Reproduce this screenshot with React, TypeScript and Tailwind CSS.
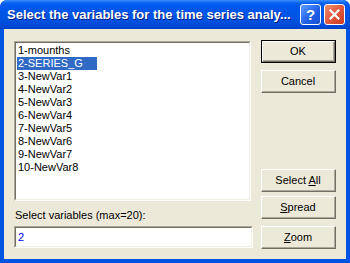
import React from "react";

const items = [
  "1-mounths",
  "2-SERIES_G",
  "3-NewVar1",
  "4-NewVar2",
  "5-NewVar3",
  "6-NewVar4",
  "7-NewVar5",
  "8-NewVar6",
  "9-NewVar7",
  "10-NewVar8",
];

function Btn({ children, def }: { children: React.ReactNode; def?: boolean }) {
  return (
    <div className={"w-[75px] h-[23px] " + (def ? "border border-black" : "")}>
      <div className="w-full h-full border-t border-l border-white border-b border-r border-b-[#716F64] border-r-[#716F64]">
        <div className="w-full h-full border-b border-r border-b-[#ACA899] border-r-[#ACA899] flex items-center justify-center text-[11px] text-black leading-none">
          <span className="whitespace-pre">{children}</span>
        </div>
      </div>
    </div>
  );
}

export default function App() {
  return (
    <div
      className="w-[350px] h-[263px] flex flex-col rounded-t-[7px] overflow-hidden bg-[#0054E3]"
      style={{ fontFamily: '"Liberation Sans", Arial, sans-serif' }}
    >
      <div className="h-[29px] shrink-0 flex items-center pl-[7px] pr-[5px] bg-[linear-gradient(to_bottom,#3C8EFF_0px,#0A62F0_3px,#0058EE_6px,#0054E3_18px,#0049D6_26px,#0040C4_29px)]">
        <div className="flex-1 text-white font-bold text-[13px] whitespace-nowrap [text-shadow:1px_1px_0_#0A1E80]">
          Select the variables for the time series analy...
        </div>
        <div className="flex gap-[3px] items-center">
          <div className="w-[21px] h-[21px] rounded-[3px] border border-white bg-[linear-gradient(135deg,#5C9CFF,#1E5FE8_60%,#1650D0)] flex items-center justify-center text-white font-bold text-[15px] leading-none">
            ?
          </div>
          <div className="w-[21px] h-[21px] rounded-[3px] border border-white bg-[linear-gradient(135deg,#EE8F6E,#E0553A_55%,#C43B22)] flex items-center justify-center">
            <svg width="11" height="11" viewBox="0 0 11 11">
              <path d="M1.5 1.5 L9.5 9.5 M9.5 1.5 L1.5 9.5" stroke="white" strokeWidth="2.2" strokeLinecap="square" />
            </svg>
          </div>
        </div>
      </div>
      <div className="flex-1 mx-[4px] mb-[4px] bg-[#ECE9D8] flex">
        <div className="pl-[10px] pt-[12px] w-[250px] flex flex-col">
          <div className="w-[237px] h-[160px] border-t border-l border-[#ACA899] border-b-white border-r-white border-b border-r">
            <div className="w-full h-full border-t border-l border-[#716F64] border-b border-r border-b-[#F1EFE2] border-r-[#F1EFE2] bg-white pt-[1px] pl-[1px]">
              {items.map((it, i) => (
                <div key={it} className="h-[13px] text-[11px] leading-[13px] text-black">
                  <span
                    className={
                      i === 1
                        ? "inline-block bg-[#316AC5] text-white w-[80px] pl-[1px]"
                        : "inline-block pl-[1px]"
                    }
                  >
                    {it}
                  </span>
                </div>
              ))}
            </div>
          </div>
          <div className="mt-[8px] pl-[1px] text-[11px] leading-[13px] text-black">
            Select variables (max=20):
          </div>
          <div className="mt-[4px] w-[239px] h-[22px] border-t border-l border-[#ACA899] border-b-white border-r-white border-b border-r">
            <div className="w-full h-full border-t border-l border-[#716F64] border-b border-r border-b-[#F1EFE2] border-r-[#F1EFE2] bg-white pl-[2px] flex items-center text-[11px] text-[#0000FF]">
              2
            </div>
          </div>
        </div>
        <div className="pl-[7px] pt-[11px] flex flex-col">
          <Btn def>OK</Btn>
          <div className="h-[7px]" />
          <Btn>Cancel</Btn>
          <div className="h-[76px]" />
          <Btn>
            {"Select "}
            <span className="underline">A</span>ll
          </Btn>
          <div className="h-[4px]" />
          <Btn>
            <span className="underline">S</span>pread
          </Btn>
          <div className="h-[7px]" />
          <Btn>
            <span className="underline">Z</span>oom
          </Btn>
        </div>
      </div>
    </div>
  );
}
